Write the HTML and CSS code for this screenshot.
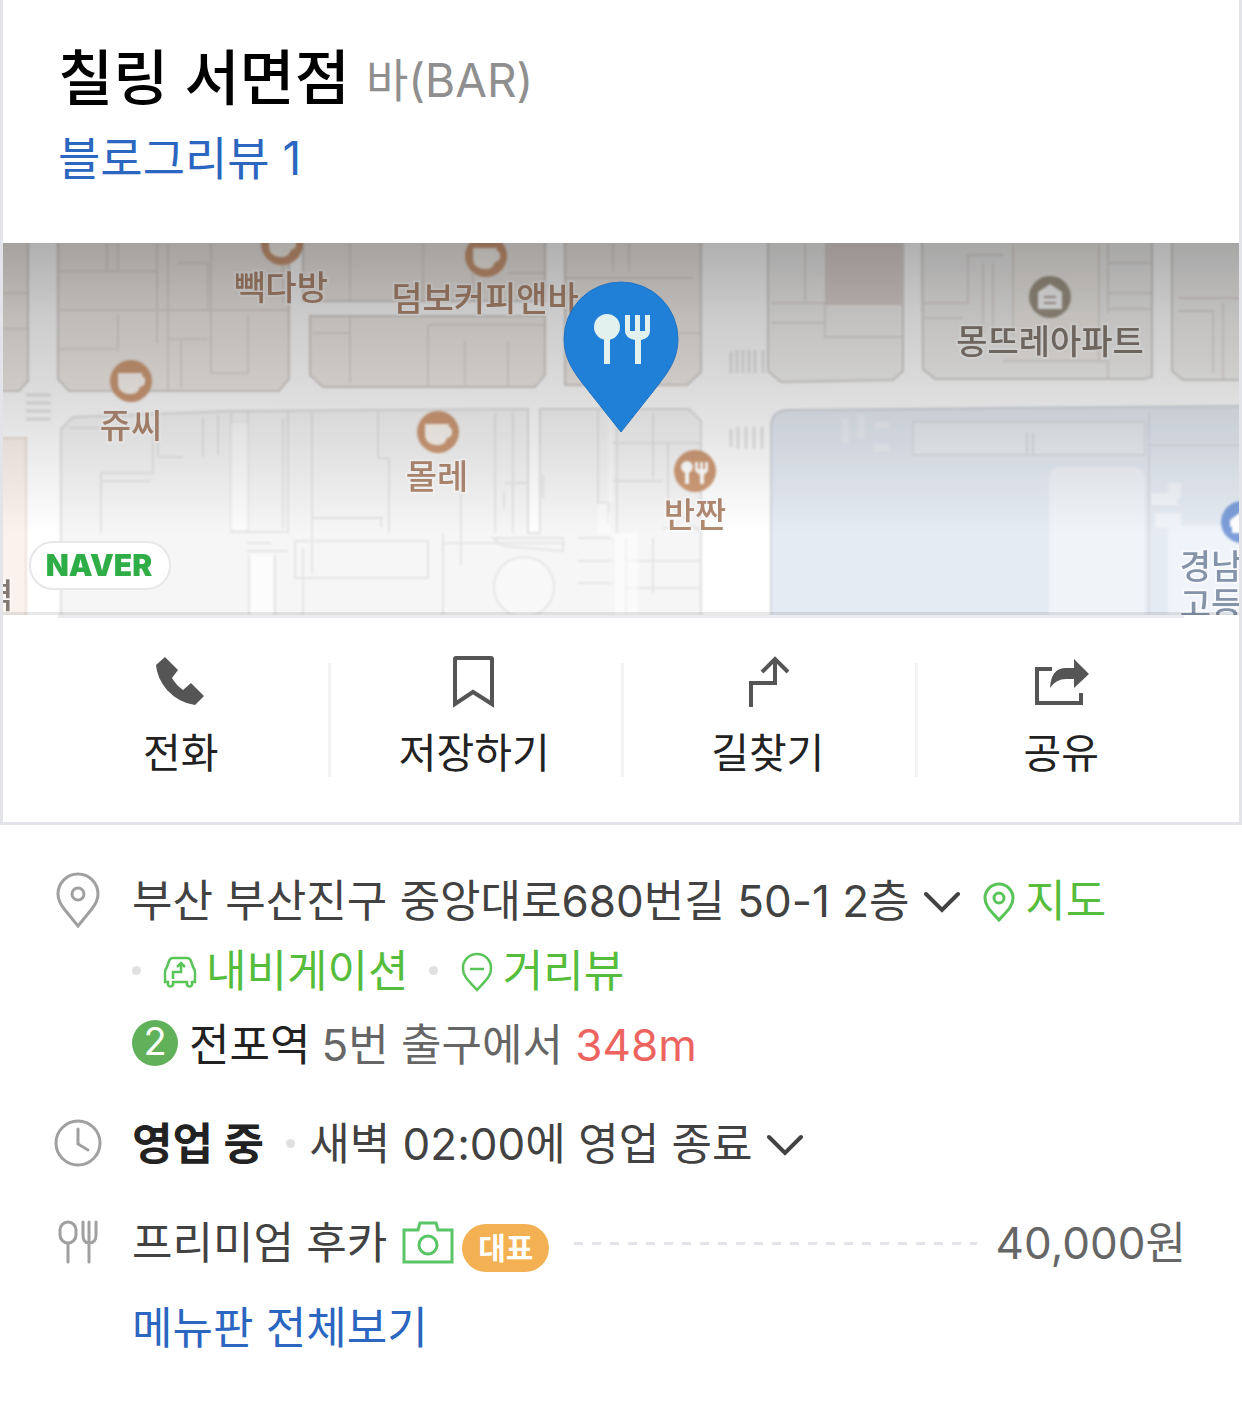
FILE: index.html
```html
<!doctype html>
<html lang="ko">
    <head>
        <meta charset="utf-8">
        <meta name="viewport" content="width=device-width, initial-scale=1">
        <title>칠링 서면점</title>
        <link rel="stylesheet" href="styles.css">
    </head>
    <body>
        <section class="card">
            <header class="place">
                <h1 class="place-name">칠링 서면점 <span class="category">바(BAR)</span></h1>
                <a class="link" href="#">블로그리뷰 1</a>
            </header>

            <a class="map" href="#" aria-label="지도">
                <svg class="map-svg" viewBox="0 0 1236 372" preserveAspectRatio="xMidYMid slice">
                    <defs>
                        <linearGradient id="shade" x1="0" y1="0" x2="0" y2="1">
                            <stop offset="0" stop-color="#000" stop-opacity=".31"/>
                            <stop offset=".2" stop-color="#000" stop-opacity=".2"/>
                            <stop offset=".45" stop-color="#000" stop-opacity=".12"/>
                            <stop offset=".78" stop-color="#000" stop-opacity="0"/>
                        </linearGradient>
                        <g id="cafe">
                            <circle r="21"/>
                            <path fill="#fbf6f0" d="M-13-8H11V-5Q15-4 14 2Q13 5 9 6Q7 13 1 13H-3Q-13 11-13 3Z"/>
                        </g>
                    </defs>
                    <rect width="1236" height="372" fill="#fff"/>
                    <g class="soft">
                        <!-- blocks -->
                        <g fill="#f0ebe7" stroke="#d6d1ce" stroke-width="2">
                            <path d="M-5-5H25V138L16 148H-5Z"/>
                            <path d="M55-5H286V136L276 148H66L55 136Z"/>
                            <path d="M300-5H542V58H300Z"/>
                            <path d="M307 73H542V132L532 144H320L307 132Z"/>
                            <path d="M562-5H698V129L684 142H562Z"/>
                        </g>
                        <path d="M-5 195H23V380H-5Z" fill="#fcf2ed" stroke="#ece0d8" stroke-width="2"/>
                        <g fill="#f3f2f1" stroke="#d6d5d3" stroke-width="2">
                            <path d="M765-5H900V128L890 137L778 139L765 128Z"/>
                            <path d="M919-5H1149V134L1140 136H932L920 126Z"/>
                            <path d="M1169-5H1245V137H1180L1169 128Z"/>
                        </g>
                        <path d="M822-5H900V62H822Z" fill="#e0d6d3"/>
                        <path d="M1010-5H1096V118H1010Z" fill="#f4f1ec"/>
                        <g fill="#f6f6f6" stroke="#e0e0e0" stroke-width="2">
                            <path d="M58 380V186L70 174L230 168L525 166V290H537V166H686L698 178V380Z"/>
                        </g>
                        <!-- building outlines -->
                        <g fill="none" stroke="#c9c0bb" stroke-opacity=".4" stroke-width="2">
                            <path d="M0 50H24M0 86H24M56 28H155M56 67H286M104 0V28M115 0V28M165 0V148M55 106H115V72M154 0V100M175 20H205V67M205 96H165M208 0V130H245V72M178 98V145M280 20V60M347 0V58M420 0V58M347 73V140M310 90H347M425 82V144M462 98V142M505 98V144M425 82H542M470 0V58M505 30H542M610 0V28M626 0V28M562 35H690M645 90H698"/>
                            <path d="M768 60H822V94H900M768 80H822M802 0V58M921 60H965V12H1000M921 75H960M1010 0V92M1096 0V118M1105 20H1149M1105 50H1149M1105 66H1149M1105 0V70M1000 118H1105V136M1175 55H1245M1175 68H1210V130M1220 60V137M980 20V90M990 20V90"/>
                        </g>
                        <g fill="none" stroke="#e5e5e5" stroke-width="2">
                            <path d="M66 185H150V230H98V290M98 238H148M155 175V214H180M200 175V214M215 172V212M228 170V289H285V168M245 168V288M244 300H268M244 308H285M280 176V286M309 170V275H380M309 275V330M375 168V215H386V290M310 275H378V284M246 312V372M272 312V372M292 298H425V335H292ZM300 305V372M440 300H562M440 290V372M492 170V290M510 170V290M502 240H525M501 250V265M537 290V200M595 168V260H605V280M614 170V290M650 170V235M610 200H698M610 238H660M665 200V260L698 290M575 295H610V372M575 318H610M575 340H610M623 295V372M650 295V350M623 318H698M623 345H698M660 285H698M540 232V255"/>
                            <circle cx="521" cy="344" r="30" fill="#f8f8f8"/>
                            <path d="M428 230H458V322M490 295H560V308L500 303Z"/>
                        </g>
                        <path d="M610 168V260H595V290H635V372H608V270H605V168Z" fill="#fff" opacity=".5"/>
                        <path d="M228 180H245V286H228ZM247 312H270V372H247Z" fill="#fff" opacity=".7"/>
                        <!-- crosswalks -->
                        <path d="M23 152H48M23 160H48M23 168H48M23 176H48M728 109V130M734 107V130M740 107V130M746 107V130M752 107V130M760 107V130M728 186V204M735 184V206M743 184V206M751 184V206M759 184V206" stroke="#e6e6e6" stroke-width="3"/>
                        <!-- school -->
                        <path d="M768 380V184Q768 167 786 167L1250 163V380Z" fill="#e5ebf3" stroke="#d3d8df" stroke-width="2"/>
                        <path d="M910 179H1142V212H910Z" fill="#ecf0f2" stroke="#dde1e6" stroke-width="2"/>
                        <path d="M1024 190V212M1030 190V212M1146 170V380M1146 202H1240" stroke="#d9dee6" stroke-width="2"/>
                        <path d="M1046 380V236Q1046 224 1058 224H1130Q1142 224 1142 238V380Z" fill="#f0f3f8"/>
                        <path d="M1165 240H1178V255H1165ZM1148 250H1175V262H1148ZM1152 270H1178V285H1152Z" fill="#f1f4f8"/>
                        <path d="M1165 282H1240V372H1165Z" fill="#eff3fa"/>
                        <path d="M842 175V200M858 172V195M870 205H886M872 182H886" stroke="#edf1f6" stroke-width="7"/>
                        <!-- points of interest -->
                        <g fill="#cf9c78">
                            <use href="#cafe" x="279" y="1"/>
                            <use href="#cafe" x="483" y="13"/>
                            <use href="#cafe" x="128" y="138"/>
                            <use href="#cafe" x="435" y="189"/>
                            <circle cx="692" cy="228" r="21"/>
                        </g>
                        <g fill="#fff">
                            <circle cx="684" cy="224" r="6"/>
                            <path d="M682 224H686V241H682ZM692 219H695V226H697V219H700V226H702V219H705V228L701 232V241H697V232L692 228Z"/>
                        </g>
                        <circle cx="1047" cy="54" r="21" fill="#a3998a"/>
                        <path d="M1035 49L1047 41L1059 49V66H1035Z" fill="#fff"/>
                        <path d="M1041 54H1053M1041 60H1053" stroke="#b3a9a0" stroke-width="2"/>
                        <circle cx="1239" cy="279" r="21" fill="#7d9ed8"/>
                        <path d="M1227 277L1239 268V290H1229V284H1227Z" fill="#fff"/>
                    </g>
                    <g class="map-labels">
                        <g class="food">
                            <text x="278" y="57">빽다방</text>
                            <text x="482" y="68">덤보커피앤바</text>
                            <text x="128" y="195">쥬씨</text>
                            <text x="434" y="246">몰레</text>
                            <text x="692" y="284">반짠</text>
                        </g>
                        <text class="home" x="1047" y="111">몽뜨레아파트</text>
                        <text class="school" x="1208" y="336">경남</text>
                        <text class="school" x="1208" y="374">고등</text>
                        <text class="home" x="-5" y="365">역</text>
                    </g>
                    <rect width="1236" height="372" fill="url(#shade)"/>
                    <!-- marker -->
                    <path d="M618 39A57 57 0 0 1 675 96C675 116 665 129 656 141L618 189L580 141C571 129 561 116 561 96A57 57 0 0 1 618 39Z" fill="#2080d8" stroke="#2472be" stroke-width="1"/>
                    <g fill="#e2f1ee">
                        <circle cx="604" cy="84" r="13"/>
                        <path d="M601 90H607V121H601ZM622 72H627V88H632V72H637V88H642V72H647V88Q647 95 638 97V121H632V97Q622 95 622 88Z"/>
                    </g>
                    <rect x="27" y="299" width="140" height="47" rx="23" fill="#fff" stroke="#e9e6e8" stroke-width="2"/>
                    <text class="naver" x="96" y="333">NAVER</text>
                    <path d="M0 370.500H1236" stroke="#000" stroke-opacity=".09" stroke-width="3"/>
                </svg>
            </a>
            <hr class="map-line">

            <nav class="actions">
                <a class="action" href="#">
                    <svg class="action-icon" viewBox="0 0 56 56" fill="#555">
                        <path d="M12 3L25 16L19 24Q23 31 30 36L38 29L51 42L42 51Q26 49 14 36Q4 24 3 11Z"/>
                    </svg>
                    <span>전화</span>
                </a>
                <a class="action" href="#">
                    <svg class="action-icon" viewBox="0 0 56 56" fill="none" stroke="#555" stroke-width="4">
                        <path d="M9 5Q9 4 10 4H45Q46 4 46 5V50L27 38L9 50Z"/>
                    </svg>
                    <span>저장하기</span>
                </a>
                <a class="action" href="#">
                    <svg class="action-icon" viewBox="0 0 56 56" fill="none" stroke="#555" stroke-width="4">
                        <path d="M11 53V29H35V5M22 18L35 5L48 18"/>
                    </svg>
                    <span>길찾기</span>
                </a>
                <a class="action" href="#">
                    <svg class="action-icon" viewBox="0 0 56 56">
                        <path d="M19 15H4V49H48V39" fill="none" stroke="#555" stroke-width="4"/>
                        <path d="M17 34Q18 14 33 14H41V5L56 20L41 34V25H33Q23 25 17 34Z" fill="#555"/>
                    </svg>
                    <span>공유</span>
                </a>
            </nav>
        </section>

        <section class="info">
            <div class="row">
                <svg class="row-icon" viewBox="0 0 48 56" fill="none" stroke="#a0a0a0" stroke-width="3">
                    <path d="M24 2A20 20 0 0 1 44 22C44 30 40 34 37 38L24 54L11 38C8 34 4 30 4 22A20 20 0 0 1 24 2Z"/>
                    <circle cx="24" cy="22" r="6"/>
                </svg>
                <div class="content">
                    <div class="address">
                        <span>부산 부산진구 중앙대로680번길 50-1 2층</span>
                        <button type="button" class="toggle" aria-label="주소 펼치기">
                            <svg class="chevron" viewBox="0 0 36 24"><path d="M2 3L18 19L34 3"/></svg>
                        </button>
                        <a class="tool" href="#"><svg class="tool-icon" viewBox="0 0 34 40" stroke-width="3"><path d="M17 2A14 14 0 0 1 31 16C31 25 23 31 17 38C11 31 3 25 3 16A14 14 0 0 1 17 2Z"/><circle cx="17" cy="16" r="5"/></svg>지도</a>
                        <a class="tool dotted" href="#"><svg class="tool-icon" viewBox="0 0 34 40" stroke-width="2.500"><path d="M10 6H24Q27 6 28 9L30 15Q32 17 32 21V30H29V33Q27 36 24 33V30H10V33Q7 36 5 33V30H2V21Q2 17 4 15L6 9Q7 6 10 6ZM10 27V20H18V12M14 15L18 11L22 15"/></svg>내비게이션</a>
                        <a class="tool dotted" href="#"><svg class="tool-icon" viewBox="0 0 34 40" stroke-width="2.500"><path d="M17 2A14 14 0 0 1 31 17C31 25 23 31 17 38C11 31 3 25 3 17A14 14 0 0 1 17 2ZM10 17H24"/></svg>거리뷰</a>
                    </div>
                    <div class="subway">
                        <span class="line-no">2</span>
                        <span class="station">전포역</span>
                        <span>5번 출구에서 <em class="distance">348m</em></span>
                    </div>
                </div>
            </div>

            <div class="row">
                <svg class="row-icon" viewBox="0 0 48 56" fill="none" stroke="#a0a0a0" stroke-width="3" stroke-linecap="round">
                    <circle cx="24" cy="28" r="22"/>
                    <path d="M24 14V29L34 35"/>
                </svg>
                <div class="content">
                    <strong class="open">영업 중</strong>
                    <span class="dotted">새벽 02:00에 영업 종료</span>
                    <button type="button" class="toggle" aria-label="영업시간 펼치기">
                        <svg class="chevron" viewBox="0 0 36 24"><path d="M2 3L18 19L34 3"/></svg>
                    </button>
                </div>
            </div>

            <div class="row">
                <svg class="row-icon" viewBox="0 0 48 56" fill="none" stroke="#a0a0a0" stroke-width="3" stroke-linecap="round">
                    <rect x="6" y="8" width="16" height="21" rx="8"/>
                    <path d="M14 30V48M29 8V21Q29 29 35 29Q42 29 42 21V8M35 8V48"/>
                </svg>
                <div class="content">
                    <div class="menu">
                        <span>프리미엄 후카</span>
                        <svg class="camera" viewBox="0 0 52 44" fill="none" stroke="#59c566" stroke-width="3">
                            <path d="M2 9H16L18 2H34L36 9H50V41H2Z"/>
                            <circle cx="26" cy="24" r="9"/>
                        </svg>
                        <span class="badge">대표</span>
                        <span class="leader"></span>
                        <span class="price">40,000원</span>
                    </div>
                    <a class="link all" href="#">메뉴판 전체보기</a>
                </div>
            </div>
        </section>
    </body>
</html>
```

FILE: styles.css
```css
* {
    box-sizing: border-box;
}

body {
    margin: 0;
    background: #fff;
    color: #424242;
    font: 44px/70px Inter, "Noto Sans CJK KR", sans-serif;
}

a {
    color: inherit;
    text-decoration: none;
}

.card {
    border: 3px solid #e3e4e9;
    border-top: 0;
}

.place {
    padding: 38px 55px 47px;
}

.place-name {
    margin: 0 0 3px;
    color: #000;
    font-size: 60px;
    line-height: 80px;
    font-weight: 500;
}

.category {
    color: #8f8f8f;
    font-size: 46px;
    line-height: 1;
    font-weight: 400;
    vertical-align: 3px;
}

.link {
    display: block;
    color: #2b66c0;
}

.place .link {
    font-size: 46px;
    line-height: 75px;
}

/* map */
.map,
.map-svg {
    display: block;
    width: 100%;
    height: 372px;
}

.soft {
    filter: blur(1px);
}

.map-labels text {
    font-size: 34px;
    font-weight: 500;
    text-anchor: middle;
    paint-order: stroke;
    stroke: #fff;
    stroke-opacity: 0.5;
    stroke-width: 4px;
}

.map-labels .food {
    fill: #b18a72;
}

.map-labels .home {
    fill: #857a72;
}

.map-labels .school {
    fill: #8593a9;
}

.map .naver {
    fill: #2fae48;
    font-size: 30px;
    font-weight: 900;
    text-anchor: middle;
}

.map-line {
    height: 3px;
    margin: 0 55px;
    border: 0;
    background: #e9ebee;
}

/* call / save / route / share */
.actions {
    display: grid;
    grid-template-columns: repeat(4, 1fr);
    padding: 34px 31px 36px;
}

.action {
    display: flex;
    flex-direction: column;
    align-items: center;
    gap: 8px;
    color: #222;
    font-size: 41px;
    line-height: 66px;
}

.action + .action {
    background: linear-gradient(#f3f3f3, #f3f3f3) no-repeat 0 11px / 3px 114px;
}

.action-icon {
    width: 56px;
    height: 60px;
}

/* details */
.info {
    display: flex;
    flex-direction: column;
    gap: 29px;
    padding: 41px 56px 38px 54px;
}

.row {
    display: flex;
    gap: 30px;
}

.row-icon {
    flex: none;
    width: 48px;
    height: 56px;
    margin-top: 6px;
}

.content {
    flex: 1;
}

.toggle {
    margin: 0 10px 0 2px;
    padding: 0;
    border: 0;
    background: none;
    font: inherit;
    cursor: pointer;
}

.chevron {
    width: 36px;
    height: 24px;
    vertical-align: 2px;
    fill: none;
    stroke: #424242;
    stroke-width: 4px;
    stroke-linecap: round;
}

.tool {
    color: #55bd3b;
    white-space: nowrap;
}

.tool-icon {
    width: 34px;
    height: 40px;
    margin-right: 9px;
    vertical-align: -5px;
    fill: none;
    stroke: #59c559;
}

.dotted::before {
    content: "";
    display: inline-block;
    width: 9px;
    height: 9px;
    margin-right: 22px;
    border-radius: 50%;
    background: #e0e0e0;
    vertical-align: 12px;
}

.tool + .dotted + .dotted {
    margin-left: 8px;
}

.subway {
    display: flex;
    align-items: center;
    gap: 11px;
    margin-top: 4px;
    color: #666;
}

.line-no {
    width: 46px;
    height: 46px;
    margin-bottom: 4px;
    border-radius: 50%;
    background: #61b15a;
    color: #fff;
    font-size: 38px;
    line-height: 42px;
    text-align: center;
}

.station,
.open {
    color: #222;
}

.open {
    font-weight: 700;
}

.open + .dotted::before {
    margin: 0 14px 0 10px;
}

.distance {
    color: #ed645f;
    font-style: normal;
}

.menu {
    display: flex;
    align-items: center;
}

.camera {
    width: 52px;
    height: 44px;
    margin: 0 8px 0 15px;
}

.badge {
    margin-top: 10px;
    padding: 0 16px;
    border-radius: 24px;
    background: #f3b154;
    color: #fff;
    font-size: 30px;
    line-height: 48px;
    font-weight: 700;
}

.leader {
    flex: 1;
    height: 3px;
    margin: 0 19px 0 25px;
    background: repeating-linear-gradient(90deg, #e3e4e9 0 9px, transparent 9px 18px);
}

.price {
    color: #666;
}

.all {
    margin-top: 15px;
}
```
